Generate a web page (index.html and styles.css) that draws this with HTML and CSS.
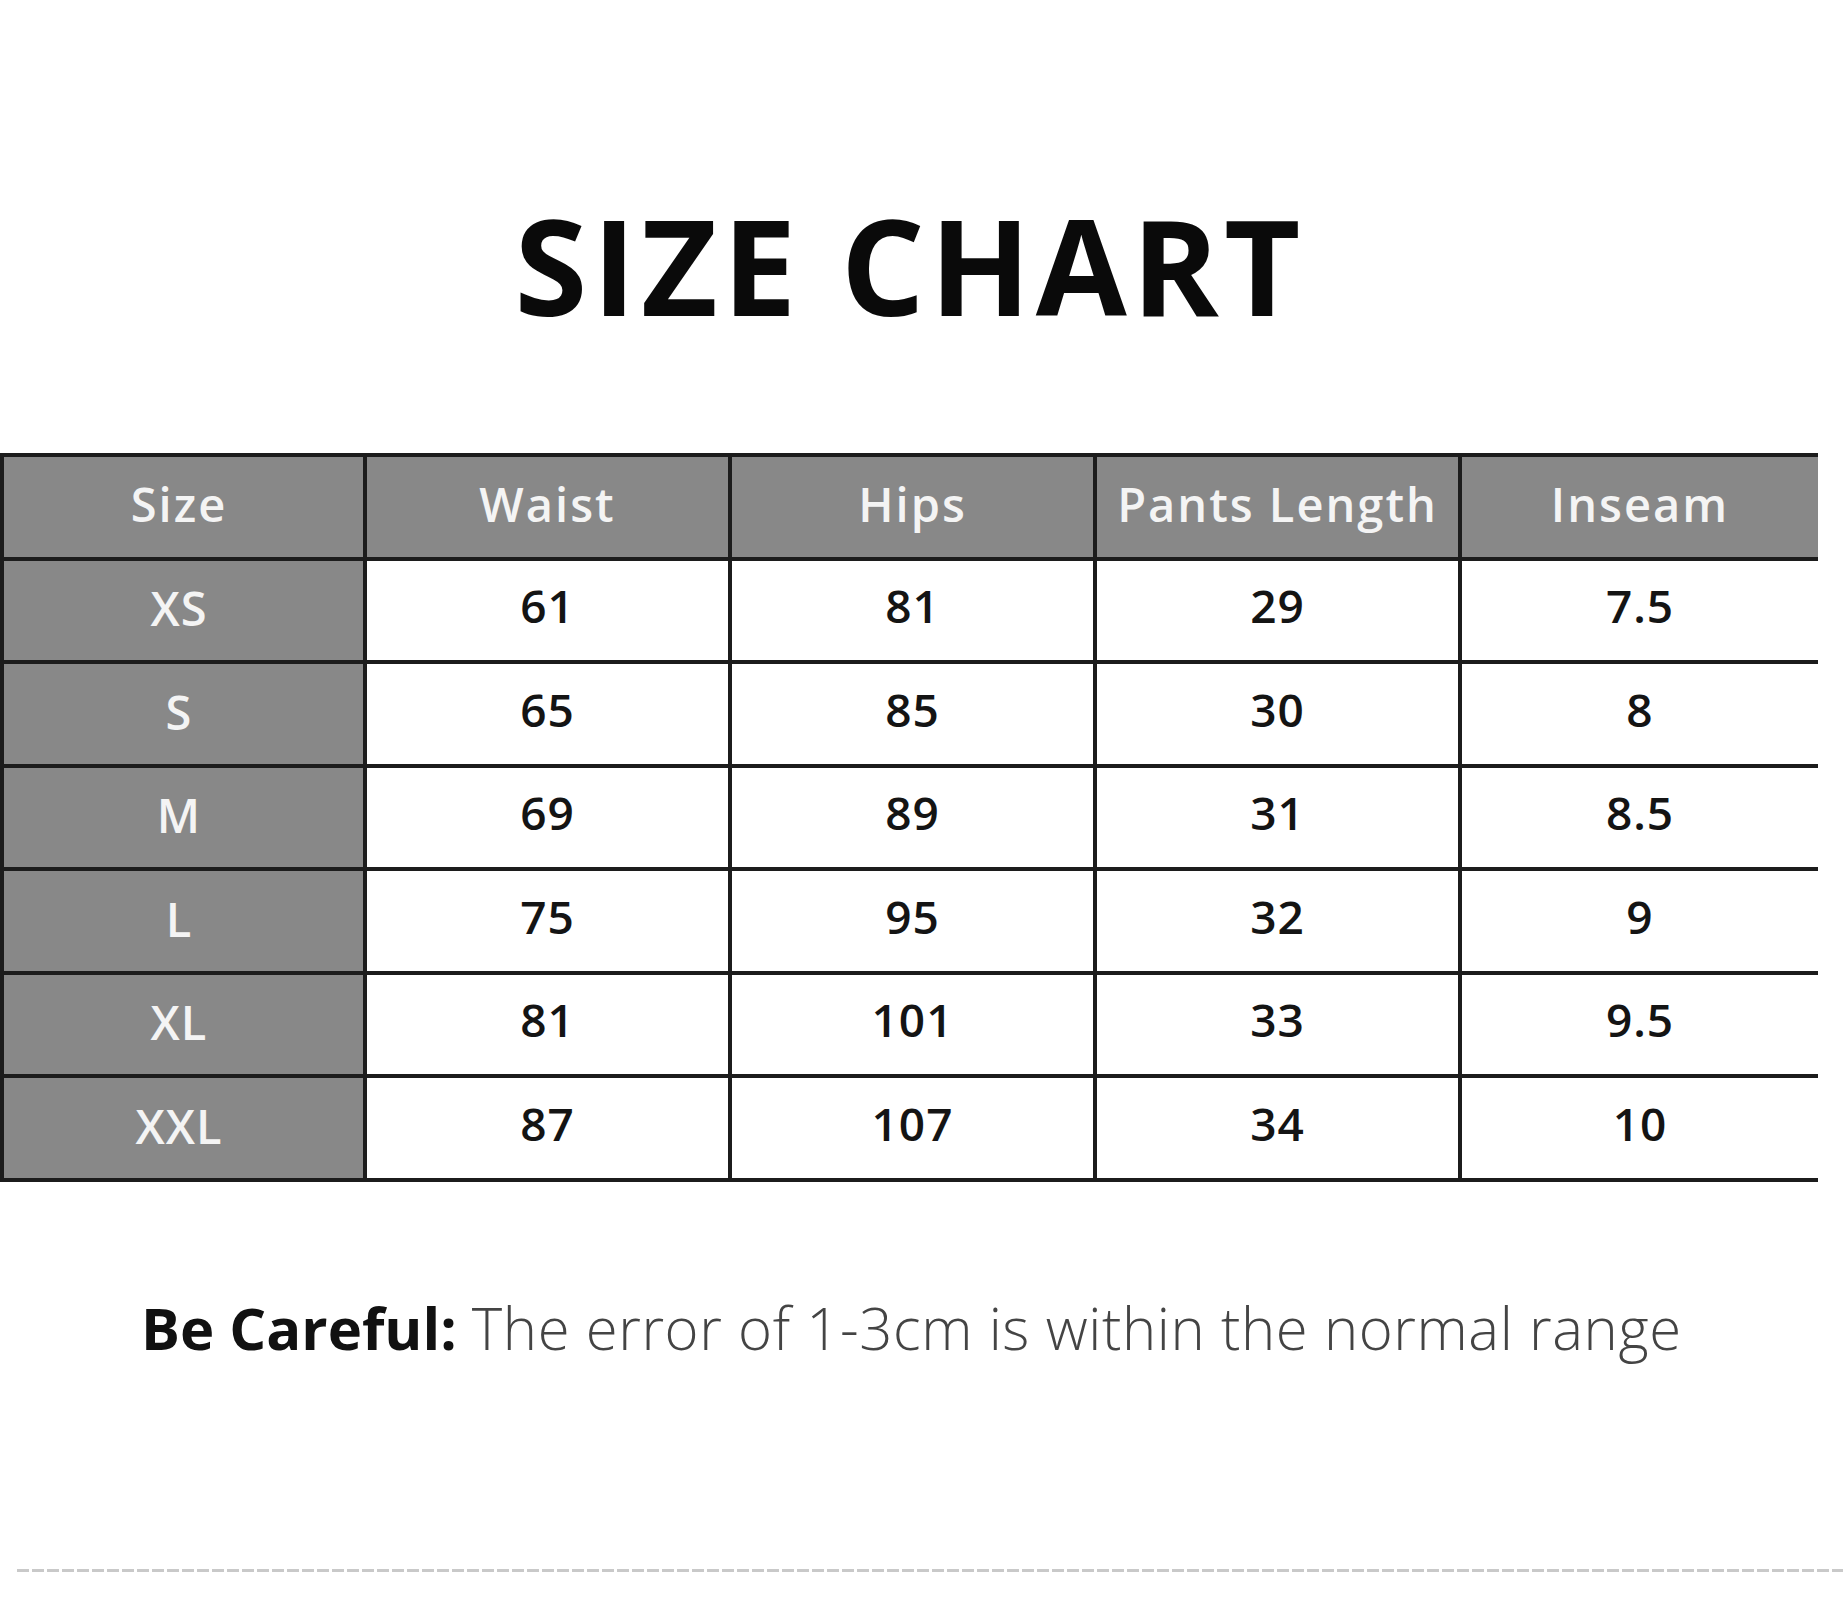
FILE: index.html
```html
<!DOCTYPE html>
<html lang="en">
<head>
<meta charset="utf-8">
<title>Size Chart</title>
<link rel="stylesheet" href="styles.css">
</head>
<body>
<div class="page">
  <h1 class="title">SIZE CHART</h1>
  <div class="chart">
    <div class="cell head first">Size</div>
    <div class="cell head">Waist</div>
    <div class="cell head">Hips</div>
    <div class="cell head">Pants Length</div>
    <div class="cell head">Inseam</div>

    <div class="cell size first">XS</div>
    <div class="cell val">61</div>
    <div class="cell val">81</div>
    <div class="cell val">29</div>
    <div class="cell val">7.5</div>

    <div class="cell size first">S</div>
    <div class="cell val">65</div>
    <div class="cell val">85</div>
    <div class="cell val">30</div>
    <div class="cell val">8</div>

    <div class="cell size first">M</div>
    <div class="cell val">69</div>
    <div class="cell val">89</div>
    <div class="cell val">31</div>
    <div class="cell val">8.5</div>

    <div class="cell size first">L</div>
    <div class="cell val">75</div>
    <div class="cell val">95</div>
    <div class="cell val">32</div>
    <div class="cell val">9</div>

    <div class="cell size first">XL</div>
    <div class="cell val">81</div>
    <div class="cell val">101</div>
    <div class="cell val">33</div>
    <div class="cell val">9.5</div>

    <div class="cell size first">XXL</div>
    <div class="cell val">87</div>
    <div class="cell val">107</div>
    <div class="cell val">34</div>
    <div class="cell val">10</div>
  </div>
  <p class="note"><span class="note-label">Be Careful:</span> <span class="note-text">The error of 1-3cm is within the normal range</span></p>
  <div class="rule"></div>
</div>
</body>
</html>
```

FILE: styles.css
```css
html, body {
  margin: 0;
  padding: 0;
  background: #ffffff;
}

.page {
  width: 1843px;
  display: flex;
  flex-direction: column;
  font-family: "Open Sans", "Noto Sans", "DejaVu Sans", sans-serif;
}

.title {
  width: 1820px;
  margin: 199px 0 0 0;
  font-size: 132px;
  line-height: 132px;
  font-weight: 700;
  letter-spacing: 5px;
  font-stretch: 96%;
  text-align: center;
  color: #0a0a0a;
}

.chart {
  margin-top: 122px;
  width: 1818px;
  display: grid;
  grid-template-columns: 363px 365px 365px 365px 360px;
  grid-auto-rows: 103.5px;
  border-bottom: 4px solid #1c1c1c;
}

.cell {
  box-sizing: border-box;
  border-top: 4px solid #1c1c1c;
  border-left: 4px solid #1c1c1c;
  display: flex;
  align-items: center;
  justify-content: center;
  font-weight: 600;
}

.head {
  background: #888888;
  color: #f4f4f4;
  font-size: 47px;
  letter-spacing: 2px;
  font-stretch: 88%;
  padding-bottom: 6px;
}

.size {
  background: #888888;
  color: #f4f4f4;
  font-size: 47px;
  letter-spacing: 1px;
  font-stretch: 100%;
  padding-bottom: 4px;
}

.first {
  padding-right: 9px;
}

.val {
  background: #ffffff;
  color: #141414;
  font-size: 46px;
  letter-spacing: 1px;
  font-stretch: 94%;
  padding-bottom: 10px;
}

.note {
  margin: 117px 0 0 0;
  padding-left: 141px;
  font-size: 58px;
  line-height: 58px;
  white-space: nowrap;
}

.note-label {
  font-weight: 700;
  color: #111111;
}

.note-text {
  font-weight: 300;
  letter-spacing: 0.6px;
  color: #444444;
}

.rule {
  margin: 212px 0 0 17px;
  height: 3px;
  width: 1826px;
  background: repeating-linear-gradient(90deg, #c9c9c9 0 12px, transparent 12px 15px);
}
```
